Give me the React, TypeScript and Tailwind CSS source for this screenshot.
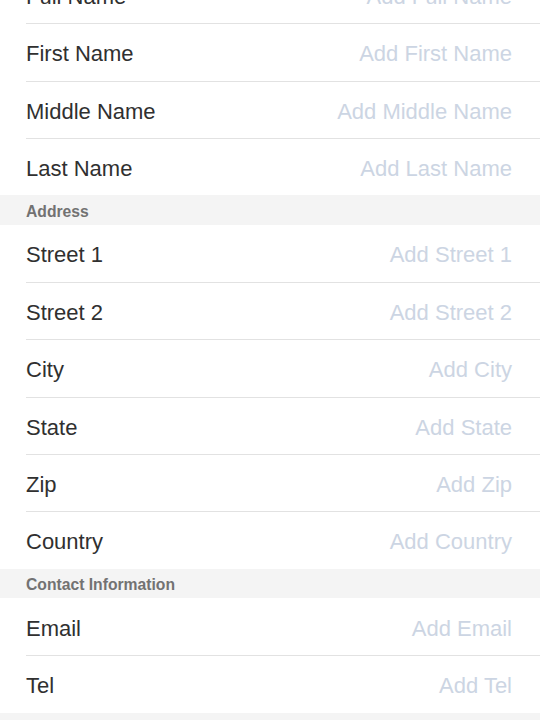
const sections: { title?: string; fields: string[] }[] = [
  { fields: ['Full Name', 'First Name', 'Middle Name', 'Last Name'] },
  { title: 'Address', fields: ['Street 1', 'Street 2', 'City', 'State', 'Zip', 'Country'] },
  { title: 'Contact Information', fields: ['Email', 'Tel'] },
  { title: 'Notes', fields: [] },
];

function Row({ label, first }: { label: string; first: boolean }) {
  return (
    <div className="pl-[26px]">
      <div
        className={`flex h-[57.33px] items-center justify-between pt-[3px] pr-[28px] ${first ? '' : 'border-t border-[#e2e2e2]'}`}
      >
        <span className="text-[22px] text-[#303030]">{label}</span>
        <span className="text-[22px] text-[#ccd5e3]">Add {label}</span>
      </div>
    </div>
  );
}

export default function App() {
  return (
    <div
      className="h-[720px] overflow-hidden bg-white"
      style={{ fontFamily: '"Liberation Sans", Arial, sans-serif' }}
    >
      <div className="-mt-[34px]">
        {sections.map((s, i) => (
          <div key={i}>
            {s.title && (
              <div className="flex h-[29.33px] items-center bg-[#f4f4f4] pt-[3px] pl-[26px] text-[15.7px] font-bold text-[#727272]">
                {s.title}
              </div>
            )}
            {s.fields.map((f, j) => (
              <Row key={f} label={f} first={j === 0} />
            ))}
          </div>
        ))}
      </div>
    </div>
  );
}
